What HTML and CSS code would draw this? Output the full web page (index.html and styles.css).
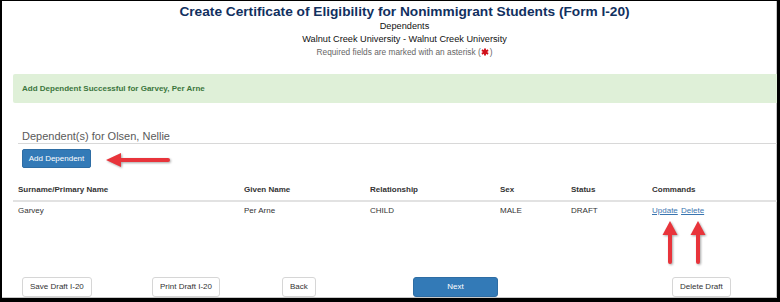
FILE: index.html
```html
<!DOCTYPE html>
<html lang="en">
<head>
    <meta charset="UTF-8">
    <meta name="viewport" content="width=device-width, initial-scale=1.0">
    <title>Dependents</title>
    <link rel="stylesheet" href="styles.css">
</head>
<body>
    <div class="frame">
        <div class="page">
            <div class="heading">
                <h1>Create Certificate of Eligibility for Nonimmigrant Students (Form I-20)</h1>
                <p class="sub">Dependents</p>
                <p class="sub">Walnut Creek University - Walnut Creek University</p>
                <p class="req">Required fields are marked with an asterisk (<svg class="star" viewBox="0 0 10 10" width="8" height="8"><path d="M5 0.5V9.5M1.1 2.75L8.9 7.25M1.1 7.25L8.9 2.75" /></svg>)</p>
            </div>

            <div class="alert">Add Dependent Successful for Garvey, Per Arne</div>

            <h2 class="section">Dependent(s) for Olsen, Nellie</h2>
            <button class="btn btn-primary btn-add">Add Dependent</button>

            <table class="deps">
                <thead>
                    <tr>
                        <th class="c-name">Surname/Primary Name</th>
                        <th class="c-given">Given Name</th>
                        <th class="c-rel">Relationship</th>
                        <th class="c-sex">Sex</th>
                        <th class="c-status">Status</th>
                        <th>Commands</th>
                    </tr>
                </thead>
                <tbody>
                    <tr>
                        <td>Garvey</td>
                        <td>Per Arne</td>
                        <td>CHILD</td>
                        <td>MALE</td>
                        <td>DRAFT</td>
                        <td><a href="#">Update</a> <a href="#" class="cmd">Delete</a></td>
                    </tr>
                </tbody>
            </table>

            <div class="actions">
                <div><button class="btn">Save Draft I-20</button></div>
                <div><button class="btn">Print Draft I-20</button></div>
                <div><button class="btn">Back</button></div>
                <div><button class="btn btn-primary btn-next">Next</button></div>
                <div></div>
                <div><button class="btn">Delete Draft</button></div>
            </div>
        </div>

        <!-- red callout arrows drawn over the page -->
        <svg class="callouts" width="780" height="302" viewBox="0 0 780 302">
            <g class="arrow">
                <path d="M120 160H168" />
                <polygon points="106,160 121,153 121,167" />
            </g>
            <g class="arrow">
                <path d="M670 234V262" />
                <polygon points="670,221 662.5,235 677.5,235" />
            </g>
            <g class="arrow">
                <path d="M698 234V262" />
                <polygon points="698,221 690.5,235 705.5,235" />
            </g>
        </svg>
    </div>
</body>
</html>
```

FILE: styles.css
```css
body {
    margin: 0;
    font-family: "Liberation Sans", Arial, sans-serif;
    color: #333;
}

.frame {
    position: relative;
    width: 780px;
    height: 302px;
    box-sizing: border-box;
    border-style: solid;
    border-color: #000;
    border-width: 1px 3px 4px 2px;
    background-color: white;
    box-shadow: inset -1px -1px 0 #c8c8c8;
    overflow: hidden;
}

.page {
    width: 794px;
    padding-left: 11px;
    box-sizing: border-box;
}

.heading {
    text-align: center;
    padding-top: 3px;
}

h1 {
    margin: 0;
    font-size: 13.7px;
    line-height: 16px;
    color: #11305f;
}

.sub {
    margin: 0;
    font-size: 9.2px;
    line-height: 13px;
    color: #111;
}

.req {
    margin: 0;
    font-size: 8.3px;
    line-height: 13px;
    color: #666;
}

.star {
    vertical-align: -1px;
    margin: 0 0.5px;
}

.star path {
    stroke: #d0111b;
    stroke-width: 2.4;
    fill: none;
}

.alert {
    margin-top: 15px;
    padding: 8px 9px;
    font-size: 8px;
    line-height: 13px;
    font-weight: bold;
    color: #3c763d;
    background-color: #dff0d8;
    border-radius: 2px;
}

.section {
    margin: 26px 0 0 5px;
    padding-left: 4px;
    font-size: 11px;
    line-height: 14px;
    font-weight: normal;
    color: #5a5a5a;
    border-bottom: 1px solid #d8d8d8;
}

.btn {
    font-family: "Liberation Sans", Arial, sans-serif;
    font-size: 8px;
    line-height: 12px;
    padding: 3px 7px;
    color: #333;
    background-color: white;
    border: 1px solid #d6d6d6;
    border-radius: 3px;
}

.btn-primary {
    color: white;
    background-color: #337ab7;
    border-color: #2e6da4;
}

.btn-add {
    display: block;
    margin: 5px 0 0 9px;
    width: 69px;
    height: 19px;
    padding: 0;
    border-radius: 2px;
}

.deps {
    margin-top: 12px;
    width: 790px;
    border-collapse: collapse;
    font-size: 8px;
    line-height: 12px;
    text-align: left;
}

.deps th {
    padding: 4px 5px;
    border-bottom: 2px solid #e2e2e2;
}

.deps td {
    padding: 3px 5px;
}

.c-name { width: 216px; }
.c-given { width: 116px; }
.c-rel { width: 120px; }
.c-sex { width: 61px; }
.c-status { width: 71px; }

.deps a {
    color: #3a75b0;
}

.deps .cmd {
    margin-left: 1px;
}

.actions {
    margin-top: 55px;
    padding-left: 9px;
    display: grid;
    grid-template-columns: repeat(6, 130px);
}

.btn-next {
    margin-left: 1px;
    width: 85px;
    height: 20px;
}

.callouts {
    position: absolute;
    left: -2px;
    top: -1px;
}

.arrow {
    filter: drop-shadow(1px 1px 1px rgba(0, 0, 0, 0.35));
}

.arrow path {
    stroke: #e8343b;
    stroke-width: 4;
    stroke-linecap: round;
    fill: none;
}

.arrow polygon {
    fill: #e8343b;
}
```
